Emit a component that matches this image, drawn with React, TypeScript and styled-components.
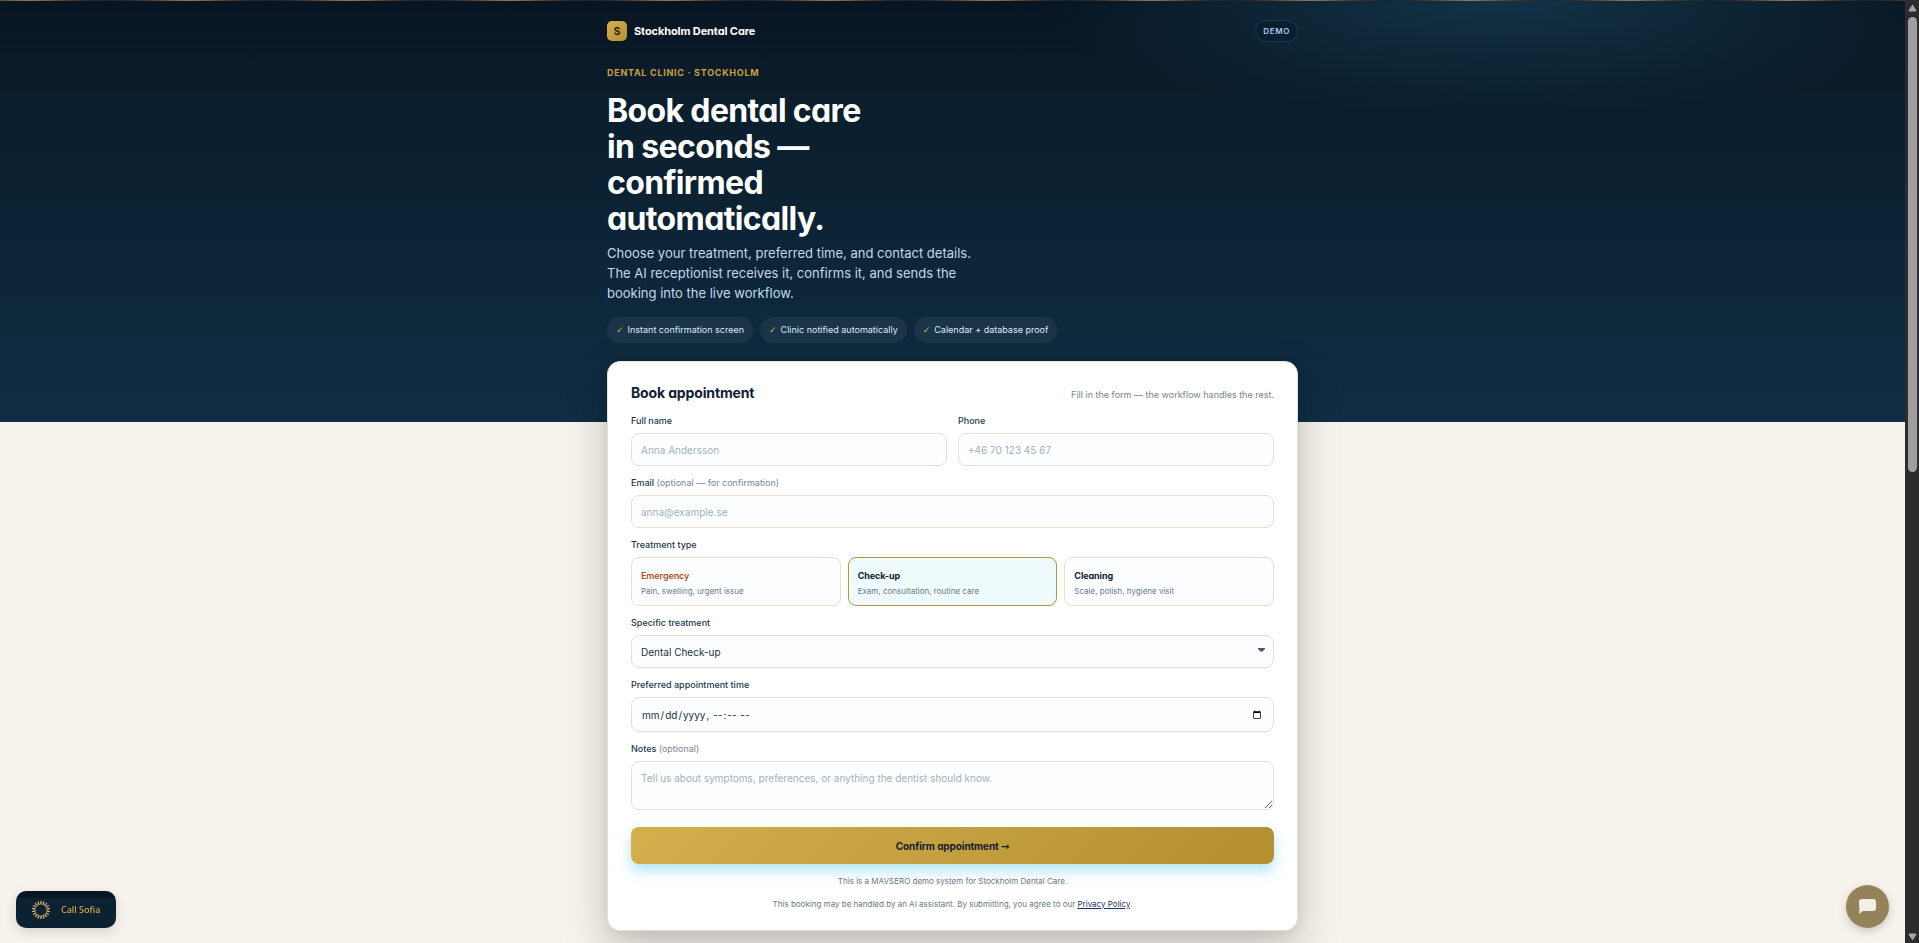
import React, { useState } from "react";
import styled, { createGlobalStyle, css } from "styled-components";

const GlobalStyle = createGlobalStyle`
  *, *::before, *::after { box-sizing: border-box; }
  body { margin: 0; background: #f7f3ec; font-family: Inter, "Liberation Sans", sans-serif; color: #0f2233; }
  h1, h2, p, fieldset { margin: 0; padding: 0; border: 0; min-width: 0; }
`;

const display = css`
  font-family: Inter, "Liberation Sans", sans-serif;
  font-feature-settings: "cv11" 1;
  font-weight: 700;
  letter-spacing: -0.01em;
`;

const Shell = styled.div`
  display: grid;
  grid-template-columns: minmax(0, 1fr) 14px;
  height: 100vh;
`;

const Page = styled.div`
  overflow-y: auto;
  scrollbar-width: none;
`;

const Hero = styled.header`
  padding: 0 24px 79px;
  background:
    repeating-linear-gradient(90deg, #8d7d4e 0, #6f613a 20px, #54402f 36px, #2b2b2e 60px, #10283a 80px, #2b2b2e 100px, #54402f 124px, #6f613a 140px, #8d7d4e 160px) 30px 0 / 160px 1px repeat-x,
    radial-gradient(460px 116px at 78.7% 0, rgba(20, 58, 82, 0.8), rgba(20, 56, 74, 0.45) 50%, transparent),
    linear-gradient(#081422, #0b1e2c 24%, #0c2436 55%, #102d43);
`;

const Column = styled.div`
  width: 100%;
  max-width: 691px;
  margin: 0 auto;
`;

const TopBar = styled.div`
  display: flex;
  align-items: center;
  justify-content: space-between;
  padding-top: 20px;
`;

const Brand = styled.a`
  ${display}
  display: flex;
  align-items: center;
  gap: 7px;
  color: #fff;
  font-size: 11px;
  text-decoration: none;
`;

const BrandMark = styled.span`
  display: grid;
  place-items: center;
  width: 20px;
  height: 20px;
  border-radius: 5px;
  background: linear-gradient(135deg, #d4af4c, #b58f34);
  color: #1b1a1a;
  font-size: 10px;
`;

const DemoBadge = styled.span`
  padding: 4px 7px;
  border: 1px solid #1d394b;
  border-radius: 11px;
  background: #0a2031;
  color: #a9cdf0;
  font-size: 8px;
  line-height: 12px;
  font-weight: 600;
  letter-spacing: 0.08em;
`;

const Eyebrow = styled.p`
  margin-top: 25px;
  color: #cca040;
  font-size: 9px;
  line-height: 12px;
  font-weight: 700;
  letter-spacing: 0.08em;
`;

const Headline = styled.h1`
  ${display}
  max-width: 280px;
  margin-top: 14px;
  color: #fff;
  font-size: 32px;
  line-height: 36px;
  letter-spacing: -0.02em;
`;

const Lead = styled.p`
  max-width: 374px;
  margin-top: 6px;
  color: #c3daeb;
  font-size: 13px;
  line-height: 20px;
`;

const Chips = styled.div`
  display: flex;
  flex-wrap: wrap;
  gap: 7px;
  margin-top: 14px;
`;

const Chip = styled.span`
  padding: 7px 9px;
  border-radius: 13px;
  background: #1a3448;
  color: #dcebf5;
  font-size: 9px;
  line-height: 12px;
`;

const Tick = styled.span`
  margin-right: 4px;
  color: #dfae3e;
  font-family: "DejaVu Sans", sans-serif;
  font-weight: 700;
`;

const Main = styled.main`
  margin-top: -61px;
  padding: 0 24px 120px;
`;

const Card = styled.form`
  padding: 22px 23px 20px;
  border: 1px solid #e9dfcf;
  border-radius: 13px;
  background: #fff;
  box-shadow: 0 18px 44px rgba(10, 20, 25, 0.22), 0 4px 14px rgba(10, 20, 25, 0.06);
`;

const CardHead = styled.div`
  display: flex;
  align-items: baseline;
  justify-content: space-between;
  margin-bottom: 13px;
`;

const CardTitle = styled.h2`
  ${display}
  color: #0f2033;
  font-size: 14px;
  line-height: 18px;
`;

const CardHint = styled.span`
  color: #748690;
  font-size: 9px;
  line-height: 12px;
`;

const Row = styled.div`
  display: grid;
  grid-template-columns: 1fr 1fr;
  gap: 11px;
`;

const Field = styled.div`
  display: flex;
  flex-direction: column;
  margin-bottom: 11px;
`;

const labelText = css`
  margin-bottom: 6px;
  color: #20394a;
  font-size: 9px;
  line-height: 12px;
  font-weight: 500;
`;

const Label = styled.label`
  ${labelText}
`;

const Optional = styled.span`
  color: #748690;
  font-weight: 400;
`;

const control = css`
  width: 100%;
  padding: 0 9px;
  border: 1px solid #e8dfd0;
  border-radius: 8px;
  outline: 0;
  background: #fcfeff;
  color: #1b3140;
  font-family: inherit;
  font-size: 10px;
  &::placeholder { color: #a0b2b7; }
`;

const Input = styled.input`
  ${control}
  height: 33px;
`;

const DateInput = styled.input`
  ${control}
  height: 35px;
`;

const Textarea = styled.textarea`
  ${control}
  height: 49px;
  padding: 9px;
  line-height: 14px;
  resize: vertical;
`;

const SelectWrap = styled.div`
  position: relative;
  display: flex;
`;

const Select = styled.select`
  ${control}
  height: 33px;
  appearance: none;
`;

const Caret = styled.svg`
  position: absolute;
  top: 13px;
  right: 9px;
  pointer-events: none;
`;

const TypeGroup = styled.fieldset`
  margin-bottom: 11px;
`;

const Legend = styled.legend`
  ${labelText}
  padding: 0;
`;

const TypeGrid = styled.div`
  display: grid;
  grid-template-columns: repeat(3, 1fr);
  gap: 7px;
`;

const TypeCard = styled.label<{ $active: boolean }>`
  position: relative;
  display: flex;
  flex-direction: column;
  gap: 3px;
  padding: 11px 9px 8px;
  border: 1px solid ${(p) => (p.$active ? "#b8943a" : "#e8dfd0")};
  border-radius: 8px;
  background: ${(p) => (p.$active ? "#effbfd" : "#fcfeff")};
  cursor: pointer;
`;

const HiddenRadio = styled.input`
  position: absolute;
  inset: 0;
  margin: 0;
  opacity: 0;
`;

const TypeName = styled.span<{ $urgent?: boolean }>`
  ${display}
  color: ${(p) => (p.$urgent ? "#a85424" : "#0f2033")};
  font-size: 9px;
  line-height: 13px;
  font-weight: ${(p) => (p.$urgent ? 600 : 700)};
`;

const TypeNote = styled.span`
  color: #667b88;
  font-size: 8px;
  line-height: 12px;
`;

const Submit = styled.button`
  ${display}
  width: 100%;
  height: 37px;
  margin-top: 6px;
  border: 0;
  border-radius: 8px;
  background: linear-gradient(135deg, #d4af4c, #b38f32);
  box-shadow: 0 7px 13px rgba(34, 180, 215, 0.35);
  color: #14202b;
  font-size: 10px;
`;

const Arrow = styled.span`
  font-family: "DejaVu Sans", sans-serif;
`;

const Fine = styled.p`
  margin-top: 11px;
  color: #687a84;
  font-size: 8px;
  line-height: 12px;
  text-align: center;
`;

const PolicyLink = styled.a`
  color: #1f3268;
  text-decoration: underline;
`;

const CallButton = styled.button`
  position: fixed;
  left: 16px;
  bottom: 15px;
  display: flex;
  align-items: center;
  gap: 11px;
  height: 37px;
  padding: 0 16px;
  border: 0;
  border-radius: 10px;
  background: linear-gradient(#081622 7px, #0c2233 7px);
  box-shadow: 0 4px 12px rgba(10, 20, 30, 0.14);
  color: #d2ab48;
  font-family: "Noto Sans", sans-serif;
  font-size: 9px;
  font-weight: 500;
`;

const ChatButton = styled.button`
  position: fixed;
  right: 30px;
  bottom: 15px;
  display: grid;
  place-items: center;
  width: 43px;
  height: 43px;
  padding: 0;
  border: 0;
  border-radius: 50%;
  background: #94835a;
  box-shadow: 0 3px 8px rgba(10, 20, 30, 0.2);
`;

const ScrollTrack = styled.div`
  display: flex;
  flex-direction: column;
  align-items: center;
  padding: 4px 0 2px;
  background: #2c2c2c;
`;

const ScrollThumb = styled.div`
  width: 9px;
  height: 48.6%;
  margin: 5px 0 auto;
  border-radius: 5px;
  background: #9f9f9f;
`;

const types = [
  { id: "emergency", name: "Emergency", note: "Pain, swelling, urgent issue", urgent: true },
  { id: "checkup", name: "Check-up", note: "Exam, consultation, routine care" },
  { id: "cleaning", name: "Cleaning", note: "Scale, polish, hygiene visit" },
];

const chips = ["Instant confirmation screen", "Clinic notified automatically", "Calendar + database proof"];

const rays = Array.from({ length: 18 }, (_, i) => i * 20);

export default function App() {
  const [type, setType] = useState("checkup");
  return (
    <>
      <GlobalStyle />
      <Shell>
        <Page>
          <Hero>
            <Column>
              <TopBar>
                <Brand href="#">
                  <BrandMark>S</BrandMark>
                  Stockholm Dental Care
                </Brand>
                <DemoBadge>DEMO</DemoBadge>
              </TopBar>
              <Eyebrow>DENTAL CLINIC · STOCKHOLM</Eyebrow>
              <Headline>Book dental care in seconds — confirmed automatically.</Headline>
              <Lead>
                Choose your treatment, preferred time, and contact details. The AI receptionist receives it, confirms
                it, and sends the booking into the live workflow.
              </Lead>
              <Chips>
                {chips.map((c) => (
                  <Chip key={c}>
                    <Tick>✓</Tick>
                    {c}
                  </Chip>
                ))}
              </Chips>
            </Column>
          </Hero>
          <Main>
            <Column>
              <Card onSubmit={(e) => e.preventDefault()}>
                <CardHead>
                  <CardTitle>Book appointment</CardTitle>
                  <CardHint>Fill in the form — the workflow handles the rest.</CardHint>
                </CardHead>
                <Row>
                  <Field>
                    <Label htmlFor="name">Full name</Label>
                    <Input id="name" placeholder="Anna Andersson" />
                  </Field>
                  <Field>
                    <Label htmlFor="phone">Phone</Label>
                    <Input id="phone" type="tel" placeholder="+46 70 123 45 67" />
                  </Field>
                </Row>
                <Field>
                  <Label htmlFor="email">
                    Email <Optional>(optional — for confirmation)</Optional>
                  </Label>
                  <Input id="email" type="email" placeholder="anna@example.se" />
                </Field>
                <TypeGroup>
                  <Legend>Treatment type</Legend>
                  <TypeGrid>
                    {types.map((t) => (
                      <TypeCard key={t.id} $active={type === t.id}>
                        <HiddenRadio
                          type="radio"
                          name="type"
                          value={t.id}
                          checked={type === t.id}
                          onChange={() => setType(t.id)}
                        />
                        <TypeName $urgent={t.urgent}>{t.name}</TypeName>
                        <TypeNote>{t.note}</TypeNote>
                      </TypeCard>
                    ))}
                  </TypeGrid>
                </TypeGroup>
                <Field>
                  <Label htmlFor="treatment">Specific treatment</Label>
                  <SelectWrap>
                    <Select id="treatment" defaultValue="Dental Check-up">
                      <option>Dental Check-up</option>
                    </Select>
                    <Caret width="7" height="4" viewBox="0 0 7 4" aria-hidden="true">
                      <path d="M0 0h7v1L4.500 3.500h-2L0 1z" fill="#4d5475" />
                    </Caret>
                  </SelectWrap>
                </Field>
                <Field>
                  <Label htmlFor="time">Preferred appointment time</Label>
                  <DateInput id="time" type="datetime-local" />
                </Field>
                <Field>
                  <Label htmlFor="notes">
                    Notes <Optional>(optional)</Optional>
                  </Label>
                  <Textarea
                    id="notes"
                    placeholder="Tell us about symptoms, preferences, or anything the dentist should know."
                  />
                </Field>
                <Submit type="submit">
                  Confirm appointment <Arrow>→</Arrow>
                </Submit>
                <Fine>This is a MAVSERO demo system for Stockholm Dental Care.</Fine>
                <Fine>
                  This booking may be handled by an AI assistant. By submitting, you agree to our{" "}
                  <PolicyLink href="#privacy">Privacy Policy</PolicyLink>.
                </Fine>
              </Card>
            </Column>
          </Main>
        </Page>
        <ScrollTrack aria-hidden="true">
          <svg width="9" height="8" viewBox="0 0 9 8">
            <path d="M4.500 0.500 8.500 6.500 7.500 7.500h-6L0.500 6.500z" fill="#a5a5a5" />
          </svg>
          <ScrollThumb />
          <svg width="9" height="8" viewBox="0 0 9 8">
            <path d="M4.500 7.500 8.500 1.500 7.500 0.500h-6L0.500 1.500z" fill="#a5a5a5" />
          </svg>
        </ScrollTrack>
      </Shell>
      <CallButton type="button">
        <svg width="18" height="18" viewBox="0 0 18 18" aria-hidden="true">
          <g stroke="#e0be62" strokeWidth="1.300">
            {rays.map((a) => (
              <line key={a} x1="9" y1="0" x2="9" y2="3.600" transform={`rotate(${a} 9 9)`} />
            ))}
          </g>
        </svg>
        Call Sofia
      </CallButton>
      <ChatButton type="button" aria-label="Open chat">
        <svg width="17" height="15" viewBox="0 0 17 15" aria-hidden="true">
          <path d="M3 0h11a3 3 0 0 1 3 3v6a3 3 0 0 1-3 3H4L0.500 15 0 3a3 3 0 0 1 3-3z" fill="#f3efe6" />
        </svg>
      </ChatButton>
    </>
  );
}
